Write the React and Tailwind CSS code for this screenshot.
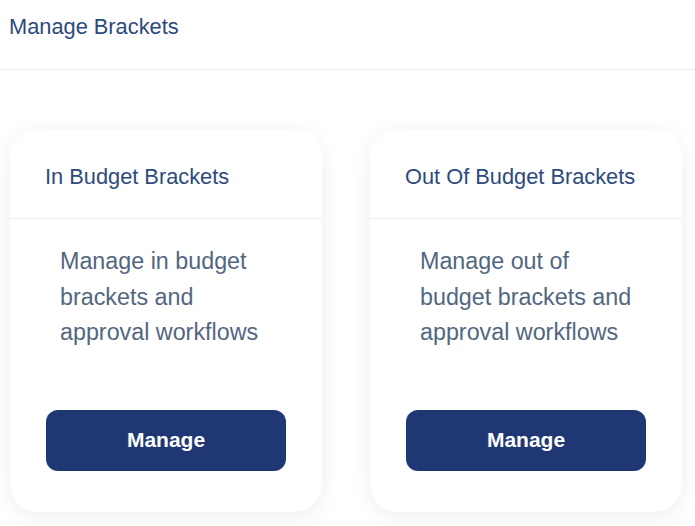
const cards = [
  { title: 'In Budget Brackets', text: 'Manage in budget brackets and approval workflows' },
  { title: 'Out Of Budget Brackets', text: 'Manage out of budget brackets and approval workflows' },
];

const BracketCard = ({ title, text }) => (
  <div className="w-[312px] bg-white rounded-[28px] shadow-[0_4px_22px_rgba(0,0,0,0.07)]">
    <div className="px-[35px] pt-[33px] pb-[26px] border-b border-[#ececec]">
      <h3 className="text-[21.8px] leading-[30px] text-[#2d4a7c]">{title}</h3>
    </div>
    <div className="px-[36px] pt-[25px] pb-[41px]">
      <p className="ml-[14px] w-[218px] text-[23.3px] leading-[35.5px] text-[#52677f]">{text}</p>
      <button className="mt-[59px] w-[240px] h-[61px] rounded-[12px] bg-[#1f3873] text-white text-[21px] font-semibold">
        Manage
      </button>
    </div>
  </div>
);

export default function App() {
  return (
    <div className="min-h-screen bg-white font-['Liberation_Sans',Arial,sans-serif]">
      <div className="h-[70px] border-b border-[#ebebeb] pl-[9px] pt-[12px]">
        <h2 className="text-[21.8px] leading-[30px] text-[#2d4a7c]">Manage Brackets</h2>
      </div>
      <div className="flex gap-[48px] pl-[10px] pt-[59px] pb-[13px]">
        {cards.map(c => (
          <BracketCard key={c.title} title={c.title} text={c.text} />
        ))}
      </div>
    </div>
  );
}
